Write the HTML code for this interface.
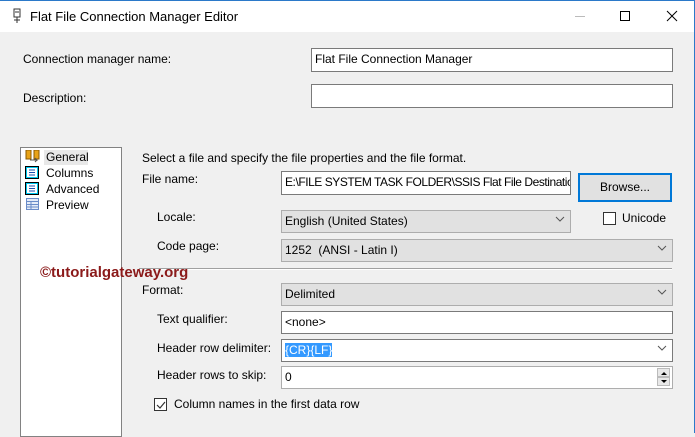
<!DOCTYPE html>
<html><head><meta charset="utf-8"><style>
*{margin:0;padding:0;box-sizing:border-box}
body{width:695px;height:433px;overflow:hidden;background:#f0f0f0;font-family:"Segoe UI","Liberation Sans",sans-serif;font-size:12px;color:#000;position:relative}
.a{position:absolute;white-space:nowrap}
.in{position:absolute;background:#fff;border:1px solid #7a7a7a;padding:3px 3px;line-height:15px;overflow:hidden;white-space:nowrap}
.cb{position:absolute;background:#e1e1e1;border:1px solid #adadad;padding:3px 3px;line-height:15px;white-space:nowrap}
.ch{position:absolute;right:5px;top:3px;width:10px;height:10px}
.lbl{position:absolute;white-space:nowrap;line-height:15px}
</style></head><body>
<div class="a" style="left:0;top:0;width:695px;height:1px;background:#2b79c9"></div>
<div class="a" style="left:694px;top:0;width:1px;height:433px;background:#2b79c9"></div>
<div class="a" style="left:0;top:1px;width:694px;height:31px;background:#fff"></div>
<svg class="a" style="left:11px;top:8px" width="12" height="16"><rect x="3" y="1" width="6" height="8" fill="none" stroke="#333"/><line x1="6" y1="9" x2="6" y2="15" stroke="#333"/><line x1="3" y1="12" x2="9" y2="12" stroke="#333"/><line x1="4" y1="4" x2="8" y2="4" stroke="#333"/></svg>
<div class="lbl" style="left:30px;top:9px;font-size:13px">Flat File Connection Manager Editor</div>
<div class="a" style="left:575px;top:16px;width:10px;height:1px;background:#bbb"></div>
<div class="a" style="left:620px;top:11px;width:10px;height:10px;border:1px solid #000"></div>
<svg class="a" style="left:666px;top:10px" width="12" height="12"><path d="M1 1L11 11M11 1L1 11" stroke="#000" stroke-width="1"/></svg>

<div class="lbl" style="left:23px;top:52px">Connection manager name:</div>
<div class="in" style="left:311px;top:48px;width:362px;height:24px">Flat File Connection Manager</div>
<div class="lbl" style="left:23px;top:91px">Description:</div>
<div class="in" style="left:311px;top:84px;width:362px;height:24px"></div>

<div class="a" style="left:20px;top:147px;width:102px;height:290px;background:#fff;border:1px solid #828282"></div>
<div class="a" style="left:44px;top:150px;width:44px;height:15px;background:#e8e8e8"></div>
<svg class="a" style="left:25px;top:150px" width="16" height="15"><rect x="1" y="0" width="5" height="9" fill="#e8a317" stroke="#8a5a00"/><rect x="9" y="0" width="5" height="9" fill="#e8a317" stroke="#8a5a00"/><path d="M5 10h7l-2 -2M12 10l-2 2" stroke="#555" fill="none"/></svg>
<svg class="a" style="left:25px;top:166px" width="15" height="14"><rect x="0.5" y="0.5" width="13" height="12" fill="#00c8f0" stroke="#000"/><rect x="2" y="2" width="10" height="9" fill="#fff"/><path d="M4 4h6M4 6.5h6M4 9h6" stroke="#1a4fb0"/></svg>
<svg class="a" style="left:25px;top:182px" width="15" height="14"><rect x="0.5" y="0.5" width="13" height="12" fill="#00c8f0" stroke="#000"/><rect x="2" y="2" width="10" height="9" fill="#fff"/><path d="M4 4h6M4 6.5h6M4 9h6" stroke="#1a4fb0"/></svg>
<svg class="a" style="left:26px;top:198px" width="14" height="13"><rect x="0.5" y="0.5" width="12" height="11" fill="#e4ecf8" stroke="#6a8cc8"/><path d="M1 3.5h11M1 6.5h11M1 9h11M5 3v8" stroke="#6a8cc8"/></svg>
<div class="lbl" style="left:46px;top:150px">General</div>
<div class="lbl" style="left:46px;top:166px">Columns</div>
<div class="lbl" style="left:46px;top:182px">Advanced</div>
<div class="lbl" style="left:46px;top:198px">Preview</div>

<div class="lbl" style="left:142px;top:151px">Select a file and specify the file properties and the file format.</div>
<div class="lbl" style="left:142px;top:172px">File name:</div>
<div class="in" style="left:281px;top:171px;width:290px;height:24px;letter-spacing:-0.45px">E:\FILE SYSTEM TASK FOLDER\SSIS Flat File Destination</div>
<div class="a" style="left:578px;top:173px;width:94px;height:29px;background:#e1e1e1;border:2px solid #0078d7;text-align:center;line-height:25px">Browse...</div>

<div class="lbl" style="left:157px;top:210px">Locale:</div>
<div class="cb" style="left:281px;top:210px;width:290px;height:23px">English (United States)<svg class="ch" viewBox="0 0 10 10"><path d="M1 3l4 4 4-4" stroke="#555" fill="none"/></svg></div>
<div class="a" style="left:603px;top:212px;width:13px;height:13px;background:#fff;border:1px solid #333"></div>
<div class="lbl" style="left:622px;top:211px">Unicode</div>

<div class="lbl" style="left:157px;top:239px">Code page:</div>
<div class="cb" style="left:281px;top:239px;width:392px;height:23px">1252&nbsp; (ANSI - Latin I)<svg class="ch" viewBox="0 0 10 10"><path d="M1 3l4 4 4-4" stroke="#555" fill="none"/></svg></div>

<div class="a" style="left:139px;top:268px;width:533px;height:1px;background:#a0a0a0"></div>
<div class="a" style="left:139px;top:269px;width:533px;height:1px;background:#fff"></div>
<div class="lbl" style="left:40px;top:265px;font-size:15px;font-weight:bold;color:#8b1a1a">©tutorialgateway.org</div>

<div class="lbl" style="left:142px;top:283px">Format:</div>
<div class="cb" style="left:281px;top:283px;width:392px;height:23px">Delimited<svg class="ch" viewBox="0 0 10 10"><path d="M1 3l4 4 4-4" stroke="#555" fill="none"/></svg></div>

<div class="lbl" style="left:157px;top:312px">Text qualifier:</div>
<div class="in" style="left:281px;top:311px;width:392px;height:23px">&lt;none&gt;</div>

<div class="lbl" style="left:157px;top:341px">Header row delimiter:</div>
<div class="in" style="left:281px;top:339px;width:392px;height:23px;border-color:#7a7a7a"><span style="background:#3399ff;color:#fff">{CR}{LF}</span><svg class="ch" viewBox="0 0 10 10"><path d="M1 3l4 4 4-4" stroke="#555" fill="none"/></svg></div>

<div class="lbl" style="left:157px;top:368px">Header rows to skip:</div>
<div class="in" style="left:281px;top:366px;width:392px;height:23px;border-color:#adadad">0</div>
<div class="a" style="left:657px;top:368px;width:13px;height:9px;background:#e8e8e8;border:1px solid #bbb"></div>
<div class="a" style="left:657px;top:377px;width:13px;height:9px;background:#e8e8e8;border:1px solid #bbb"></div>
<svg class="a" style="left:660px;top:369px" width="8" height="16"><path d="M1 6l3-3 3 3z M1 11l3 3 3-3z" fill="#000"/></svg>

<div class="a" style="left:154px;top:398px;width:13px;height:13px;background:#fff;border:1px solid #333"></div>
<svg class="a" style="left:155px;top:399px" width="12" height="12"><path d="M2 6l3 3 5-6" stroke="#333" fill="none" stroke-width="1.2"/></svg>
<div class="lbl" style="left:174px;top:397px">Column names in the first data row</div>
</body></html>
